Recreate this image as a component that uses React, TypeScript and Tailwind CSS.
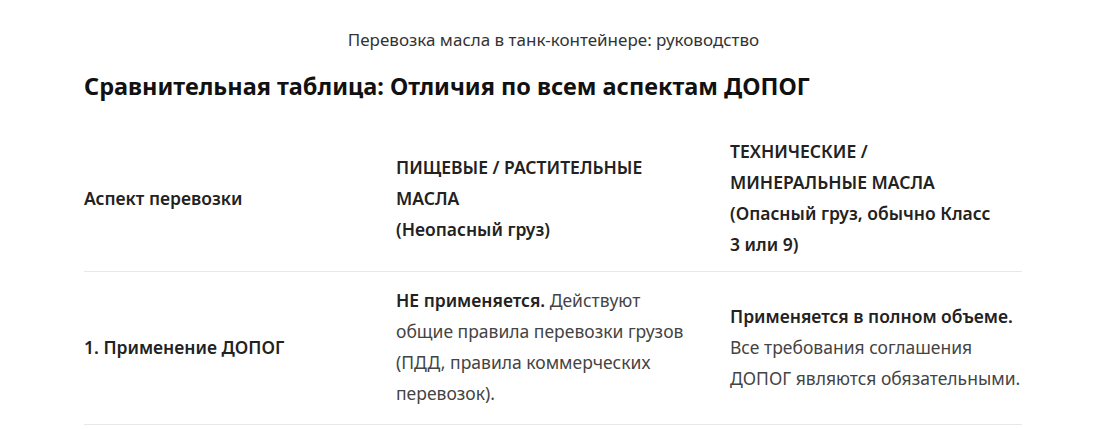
export default function App() {
  const font = { fontFamily: '"Noto Sans", "Open Sans", sans-serif' };
  return (
    <div className="w-[1119px] h-[429px] bg-white overflow-hidden text-[#222]" style={font}>
      <div className="pt-[28px] text-center text-[17px] leading-[24px] text-[#333] pr-[12px]">
        Перевозка масла в танк-контейнере: руководство
      </div>
      <h2 className="ml-[84px] mt-[18px] text-[23.5px] leading-[32px] font-bold text-[#111]">
        Сравнительная таблица: Отличия по всем аспектам ДОПОГ
      </h2>
      <div className="ml-[84px] mt-[22px] w-[938px] grid grid-cols-[312px_334px_292px] text-[17.5px] leading-[31px]">
        <div className="pt-[12px] pb-[11px] flex items-center font-semibold border-b border-[#e8e8e8]">Аспект перевозки</div>
        <div className="pt-[12px] pb-[11px] flex items-center font-semibold border-b border-[#e8e8e8]">
          <div>
            ПИЩЕВЫЕ / РАСТИТЕЛЬНЫЕ<br />МАСЛА<br />(Неопасный груз)
          </div>
        </div>
        <div className="pt-[12px] pb-[11px] flex items-center font-semibold border-b border-[#e8e8e8]">
          <div>
            ТЕХНИЧЕСКИЕ /<br />МИНЕРАЛЬНЫЕ МАСЛА<br />(Опасный груз, обычно Класс<br />3 или 9)
          </div>
        </div>

        <div className="pt-[13px] pb-[15px] flex items-center font-semibold border-b border-[#e8e8e8]">1. Применение ДОПОГ</div>
        <div className="pt-[13px] pb-[15px] flex items-center border-b border-[#e8e8e8] text-[#444]">
          <div>
            <b className="font-semibold text-[#222]">НЕ применяется.</b> Действуют<br />общие правила перевозки грузов<br />(ПДД, правила коммерческих<br />перевозок).
          </div>
        </div>
        <div className="pt-[13px] pb-[15px] flex items-center border-b border-[#e8e8e8] text-[#444]">
          <div>
            <b className="font-semibold text-[#222]">Применяется в полном объеме.</b><br />Все требования соглашения<br />ДОПОГ являются обязательными.
          </div>
        </div>
      </div>
    </div>
  );
}
